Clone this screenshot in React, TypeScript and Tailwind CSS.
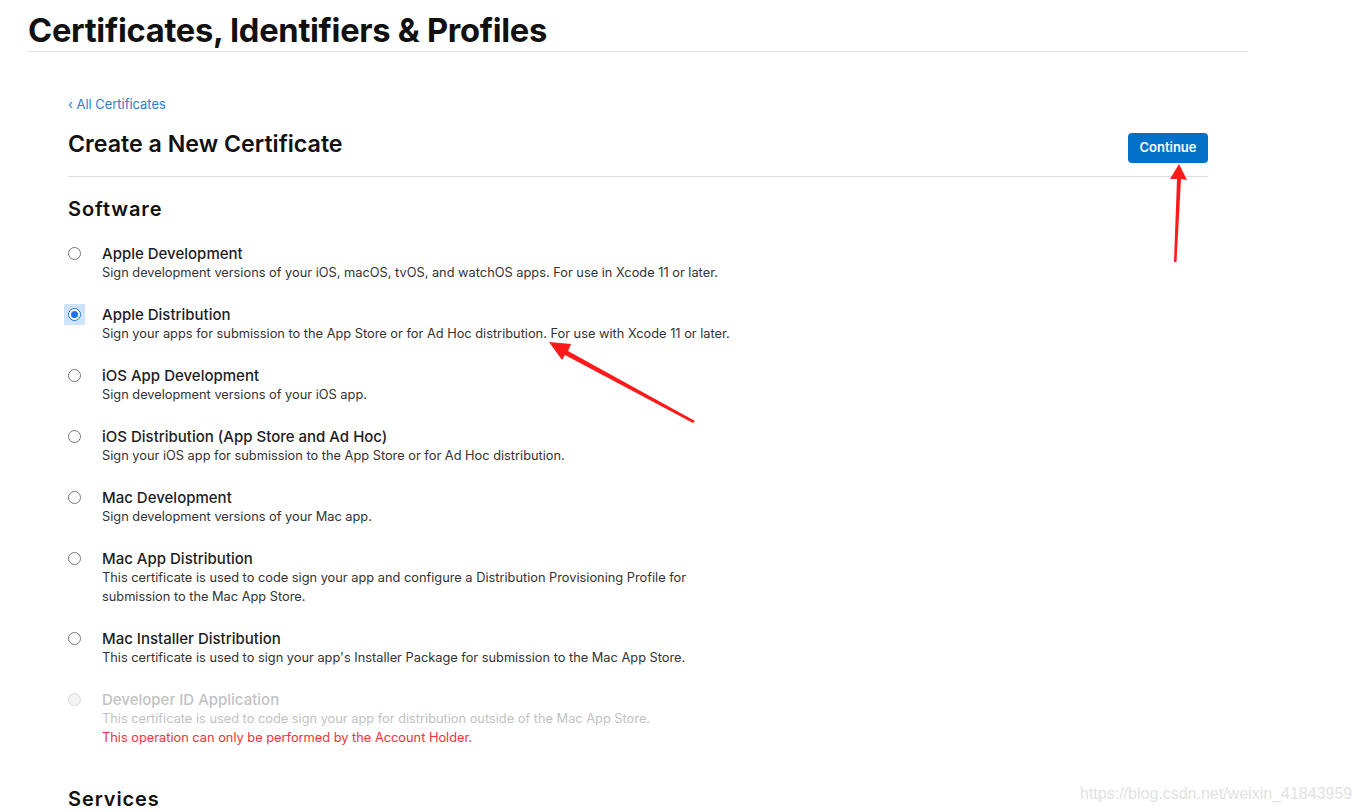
const items = [
  {
    title: "Apple Development",
    desc: ["Sign development versions of your iOS, macOS, tvOS, and watchOS apps. For use in Xcode 11 or later."],
  },
  {
    title: "Apple Distribution",
    desc: ["Sign your apps for submission to the App Store or for Ad Hoc distribution. For use with Xcode 11 or later."],
    checked: true,
  },
  { title: "iOS App Development", desc: ["Sign development versions of your iOS app."] },
  {
    title: "iOS Distribution (App Store and Ad Hoc)",
    desc: ["Sign your iOS app for submission to the App Store or for Ad Hoc distribution."],
  },
  { title: "Mac Development", desc: ["Sign development versions of your Mac app."] },
  {
    title: "Mac App Distribution",
    desc: [
      "This certificate is used to code sign your app and configure a Distribution Provisioning Profile for",
      "submission to the Mac App Store.",
    ],
  },
  {
    title: "Mac Installer Distribution",
    desc: ["This certificate is used to sign your app's Installer Package for submission to the Mac App Store."],
  },
];

const Radio = ({ checked, disabled }: { checked?: boolean; disabled?: boolean }) => {
  if (checked) {
    return (
      <div className="-ml-[4px] -mt-[4px] flex h-[21px] w-[21px] items-center justify-center bg-[#cfe3fb]">
        <div className="flex h-[13px] w-[13px] items-center justify-center rounded-full border border-[#1a73e8] bg-white">
          <div className="h-[7px] w-[7px] rounded-full bg-[#1a73e8]" />
        </div>
      </div>
    );
  }
  return (
    <div
      className={
        disabled
          ? "h-[13px] w-[13px] rounded-full border border-[#d8d8d8] bg-[#f4f4f4]"
          : "h-[13px] w-[13px] rounded-full border border-[#767676] bg-white"
      }
    />
  );
};

export default function App() {
  return (
    <div
      className="relative h-[812px] w-[1361px] overflow-hidden bg-white text-[#111]"
      style={{ fontFamily: "Inter, 'Liberation Sans', sans-serif" }}
    >
      <div className="ml-[28px] w-[1220px] border-b border-[#e3e3e3] pt-[11px] pb-[2px]">
        <h1 className="text-[32.7px] font-bold leading-[38px] tracking-[-0.3px]">
          Certificates, Identifiers &amp; Profiles
        </h1>
      </div>

      <div className="ml-[68px] w-[1140px] pt-[45px]">
        <div className="text-[12.9px] leading-[16px] text-[#2e7bd0]">‹ All Certificates</div>
        <div className="mt-[13px] flex items-start justify-between border-b border-[#dcdcdc] pb-[13px]">
          <h2 className="mt-[4px] text-[23.2px] font-semibold leading-[28px]">Create a New Certificate</h2>
          <button className="mt-[7px] h-[30px] w-[80px] rounded-[4px] bg-[#0070c9] text-[13px] font-semibold text-white">
            Continue
          </button>
        </div>

        <h3 className="mt-[20px] text-[20px] font-semibold leading-[24px] tracking-[0.9px]">Software</h3>

        <div className="mt-[23px] flex flex-col gap-[23px]">
          {items.map((it) => (
            <div key={it.title} className="flex items-start">
              <div className="w-[34px] pt-[3px]">
                <Radio checked={it.checked} />
              </div>
              <div>
                <div className="text-[15px] font-medium leading-[19px] text-[#1d1d1f]">{it.title}</div>
                {it.desc.map((d) => (
                  <div key={d} className="text-[12.8px] leading-[19px] text-[#333]">
                    {d}
                  </div>
                ))}
              </div>
            </div>
          ))}
          <div className="flex items-start">
            <div className="w-[34px] pt-[3px]">
              <Radio disabled />
            </div>
            <div>
              <div className="text-[15px] font-medium leading-[19px] text-[#c2c2c2]">Developer ID Application</div>
              <div className="text-[12.8px] leading-[19px] text-[#c2c2c2]">
                This certificate is used to code sign your app for distribution outside of the Mac App Store.
              </div>
              <div className="text-[12.8px] leading-[19px] text-[#f0323c]">
                This operation can only be performed by the Account Holder.
              </div>
            </div>
          </div>
        </div>

        <h3 className="mt-[40px] text-[20px] font-semibold leading-[24px] tracking-[0.9px]">Services</h3>
      </div>

      {/* annotation arrows */}
      <svg className="absolute left-0 top-0" width="1361" height="812">
        <polygon points="1174,262 1176.5,262 1181,179 1187,180 1179,164 1170,179 1177,179" fill="#ff1a1a" />
        <polygon points="693,423 695,421 568,351 571,344 549,342 562,360 565,355" fill="#ff1a1a" />
      </svg>

      <div
        className="absolute left-[1080px] top-[782px] text-[16px] text-[#e2e2e2]"
        style={{ fontFamily: "'Liberation Sans', sans-serif" }}
      >
        https://blog.csdn.net/weixin_41843959
      </div>
    </div>
  );
}
